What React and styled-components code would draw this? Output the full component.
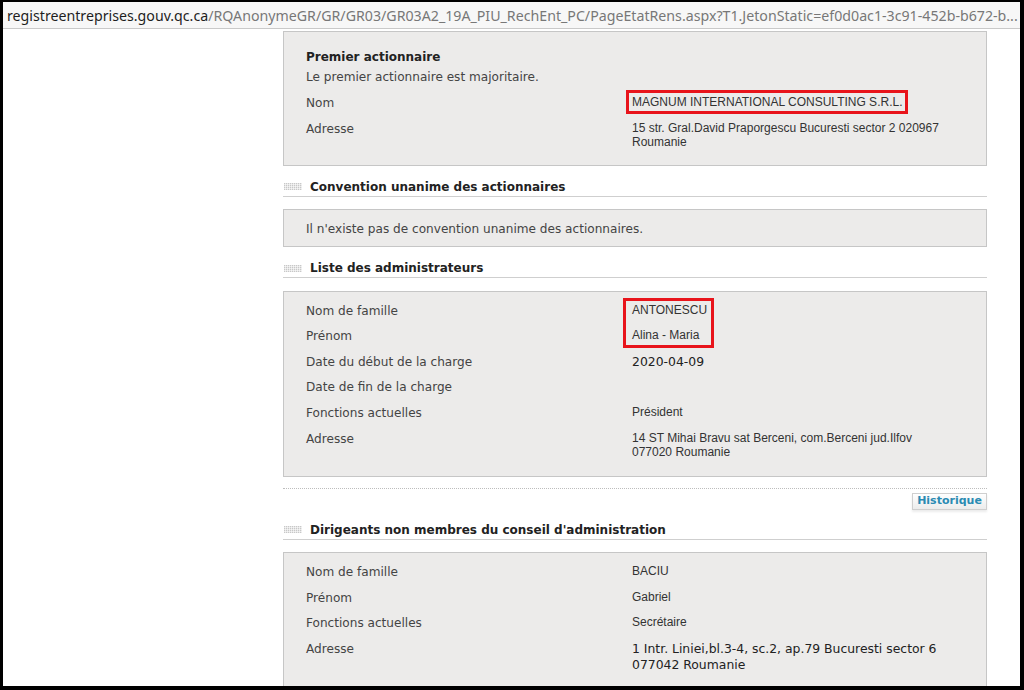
import React from "react";
import styled, { createGlobalStyle } from "styled-components";

const Global = createGlobalStyle`
  html, body { margin: 0; padding: 0; background: #000; }
  body { width: 1024px; height: 690px; overflow: hidden; }
  #root { width: 1024px; height: 690px; }
`;

const Frame = styled.div`
  box-sizing: border-box;
  width: 1024px;
  height: 690px;
  padding: 2px 4px 4px 3px;
  background: #000;
`;

const Window = styled.div`
  width: 100%;
  height: 100%;
  background: #fff;
  overflow: hidden;
  display: flex;
  flex-direction: column;
`;

const UrlBar = styled.div`
  flex: 0 0 auto;
  height: 27px;
  box-sizing: border-box;
  padding: 0 0 0 4px;
  background: #f7f7f7;
  border-bottom: 1px solid #c9c9c9;
  font-family: "Noto Sans", "Open Sans", sans-serif;
  font-size: 14.2px;
  line-height: 28px;
  color: #777;
  white-space: nowrap;
  overflow: hidden;
`;

const Host = styled.span`
  color: #1e1e1e;
`;

const Page = styled.div`
  flex: 1 1 auto;
  display: flex;
  min-height: 0;
`;

const Side = styled.div`
  flex: 0 0 280px;
`;

const Main = styled.div`
  flex: 0 0 704px;
  display: flex;
  flex-direction: column;
  padding-top: 2px;
`;

const Panel = styled.div`
  position: relative;
  background: #ecebea;
  border: 1px solid #c6c6c6;
  padding: ${(p) => p.$pad || "6px 0 17px 22px"};
  font-family: "DejaVu Sans", Verdana, sans-serif;
  font-size: 12.1px;
  color: #444;
`;

const PanelTitle = styled.div`
  font-weight: bold;
  font-size: 12px;
  color: #222;
  line-height: 18px;
`;

const Note = styled.div`
  line-height: 18px;
  padding-top: ${(p) => p.$top || "2px"};
  margin-bottom: ${(p) => p.$bottom || "0"};
`;

const Row = styled.div`
  display: grid;
  grid-template-columns: 326px 1fr;
  align-items: start;
  min-height: 25.6px;
  padding-top: 5px;
  box-sizing: border-box;
`;

const Label = styled.div`
  line-height: 16px;
`;

const Value = styled.div`
  position: relative;
  justify-self: start;
  font-family: ${(p) =>
    p.$verdana ? '"DejaVu Sans", Verdana, sans-serif' : '"Liberation Sans", Arial, sans-serif'};
  font-size: ${(p) => (p.$verdana ? "12.4px" : "12px")};
  color: ${(p) => (p.$verdana ? "#222" : "#333")};
  line-height: ${(p) => (p.$verdana ? "16px" : "14px")};
`;

const Boxed = styled.span`
  position: relative;
  &::after {
    content: "";
    position: absolute;
    left: -6px;
    right: -6px;
    top: -5px;
    bottom: -5px;
    border: 3px solid #e8141b;
  }
`;

const Highlight = styled.div`
  position: absolute;
  border: 3px solid #e8141b;
  box-sizing: border-box;
  left: 339px;
  top: 6px;
  width: 91px;
  height: 50px;
  pointer-events: none;
`;

const SectionHead = styled.div`
  display: flex;
  align-items: center;
  gap: 8px;
  margin-top: ${(p) => p.$top || "13px"};
  margin-bottom: 12.5px;
  padding: 0 0 1px 1px;
  border-bottom: 1px solid #cfcfcf;
  font-family: "DejaVu Sans", Verdana, sans-serif;
  font-size: 12px;
  font-weight: bold;
  color: #222;
  line-height: 16px;
`;

const HeadIcon = styled.span`
  width: 18px;
  height: 7px;
  background:
    repeating-linear-gradient(90deg, transparent 0 1px, rgba(255,255,255,0.6) 1px 2px),
    repeating-linear-gradient(180deg, #c8c8c8 0 1px, #e6e6e6 1px 2px);
`;

const Dotted = styled.div`
  margin-top: 11px;
  border-top: 1px dotted #bdbdbd;
`;

const ButtonBar = styled.div`
  display: flex;
  justify-content: flex-end;
  padding-top: 4px;
`;

const HistButton = styled.button`
  width: 75px;
  height: 17px;
  padding: 0;
  border: 1px solid #cfcfcf;
  background: linear-gradient(#ffffff, #ececec);
  box-shadow: 0 2px 2px rgba(0, 0, 0, 0.08);
  font-family: "DejaVu Sans", Verdana, sans-serif;
  font-size: 11px;
  font-weight: bold;
  color: #2b8bb3;
  line-height: 14px;
`;

const Fields = ({ rows }) =>
  rows.map((r) => (
    <Row key={r.label}>
      <Label>{r.label}</Label>
      <Value $verdana={r.verdana}>{r.value}</Value>
    </Row>
  ));

export default function App() {
  return (
    <>
      <Global />
      <Frame>
        <Window>
          <UrlBar>
            <Host>registreentreprises.gouv.qc.ca</Host>
            /RQAnonymeGR/GR/GR03/GR03A2_19A_PIU_RechEnt_PC/PageEtatRens.aspx?T1.JetonStatic=ef0d0ac1-3c91-452b-b672-b...
          </UrlBar>
          <Page>
            <Side />
            <Main>
              <Panel $pad="16px 0 16px 22px">
                <PanelTitle>Premier actionnaire</PanelTitle>
                <Note $bottom="4px">Le premier actionnaire est majoritaire.</Note>
                <Row>
                  <Label>Nom</Label>
                  <Value>
                    <Boxed>MAGNUM INTERNATIONAL CONSULTING S.R.L.</Boxed>
                  </Value>
                </Row>
                <Row>
                  <Label>Adresse</Label>
                  <Value>
                    15 str. Gral.David Praporgescu Bucuresti sector 2 020967
                    <br />
                    Roumanie
                  </Value>
                </Row>
              </Panel>

              <SectionHead>
                <HeadIcon />
                Convention unanime des actionnaires
              </SectionHead>
              <Panel $pad="9px 0 8px 22px">
                <Note $top="1px">Il n'existe pas de convention unanime des actionnaires.</Note>
              </Panel>

              <SectionHead>
                <HeadIcon />
                Liste des administrateurs
              </SectionHead>
              <Panel>
                <Highlight />
                <Fields
                  rows={[
                    { label: "Nom de famille", value: "ANTONESCU" },
                    { label: "Prénom", value: "Alina - Maria" },
                    { label: "Date du début de la charge", value: "2020-04-09", verdana: true },
                    { label: "Date de fin de la charge", value: "" },
                    { label: "Fonctions actuelles", value: "Président" },
                    {
                      label: "Adresse",
                      value: (
                        <>
                          14 ST Mihai Bravu sat Berceni, com.Berceni jud.Ilfov
                          <br />
                          077020 Roumanie
                        </>
                      ),
                    },
                  ]}
                />
              </Panel>
              <Dotted />
              <ButtonBar>
                <HistButton>Historique</HistButton>
              </ButtonBar>

              <SectionHead $top="12px">
                <HeadIcon />
                Dirigeants non membres du conseil d'administration
              </SectionHead>
              <Panel>
                <Fields
                  rows={[
                    { label: "Nom de famille", value: "BACIU" },
                    { label: "Prénom", value: "Gabriel" },
                    { label: "Fonctions actuelles", value: "Secrétaire" },
                    {
                      label: "Adresse",
                      verdana: true,
                      value: (
                        <>
                          1 Intr. Liniei,bl.3-4, sc.2, ap.79 Bucuresti sector 6
                          <br />
                          077042 Roumanie
                        </>
                      ),
                    },
                  ]}
                />
              </Panel>
            </Main>
          </Page>
        </Window>
      </Frame>
    </>
  );
}
